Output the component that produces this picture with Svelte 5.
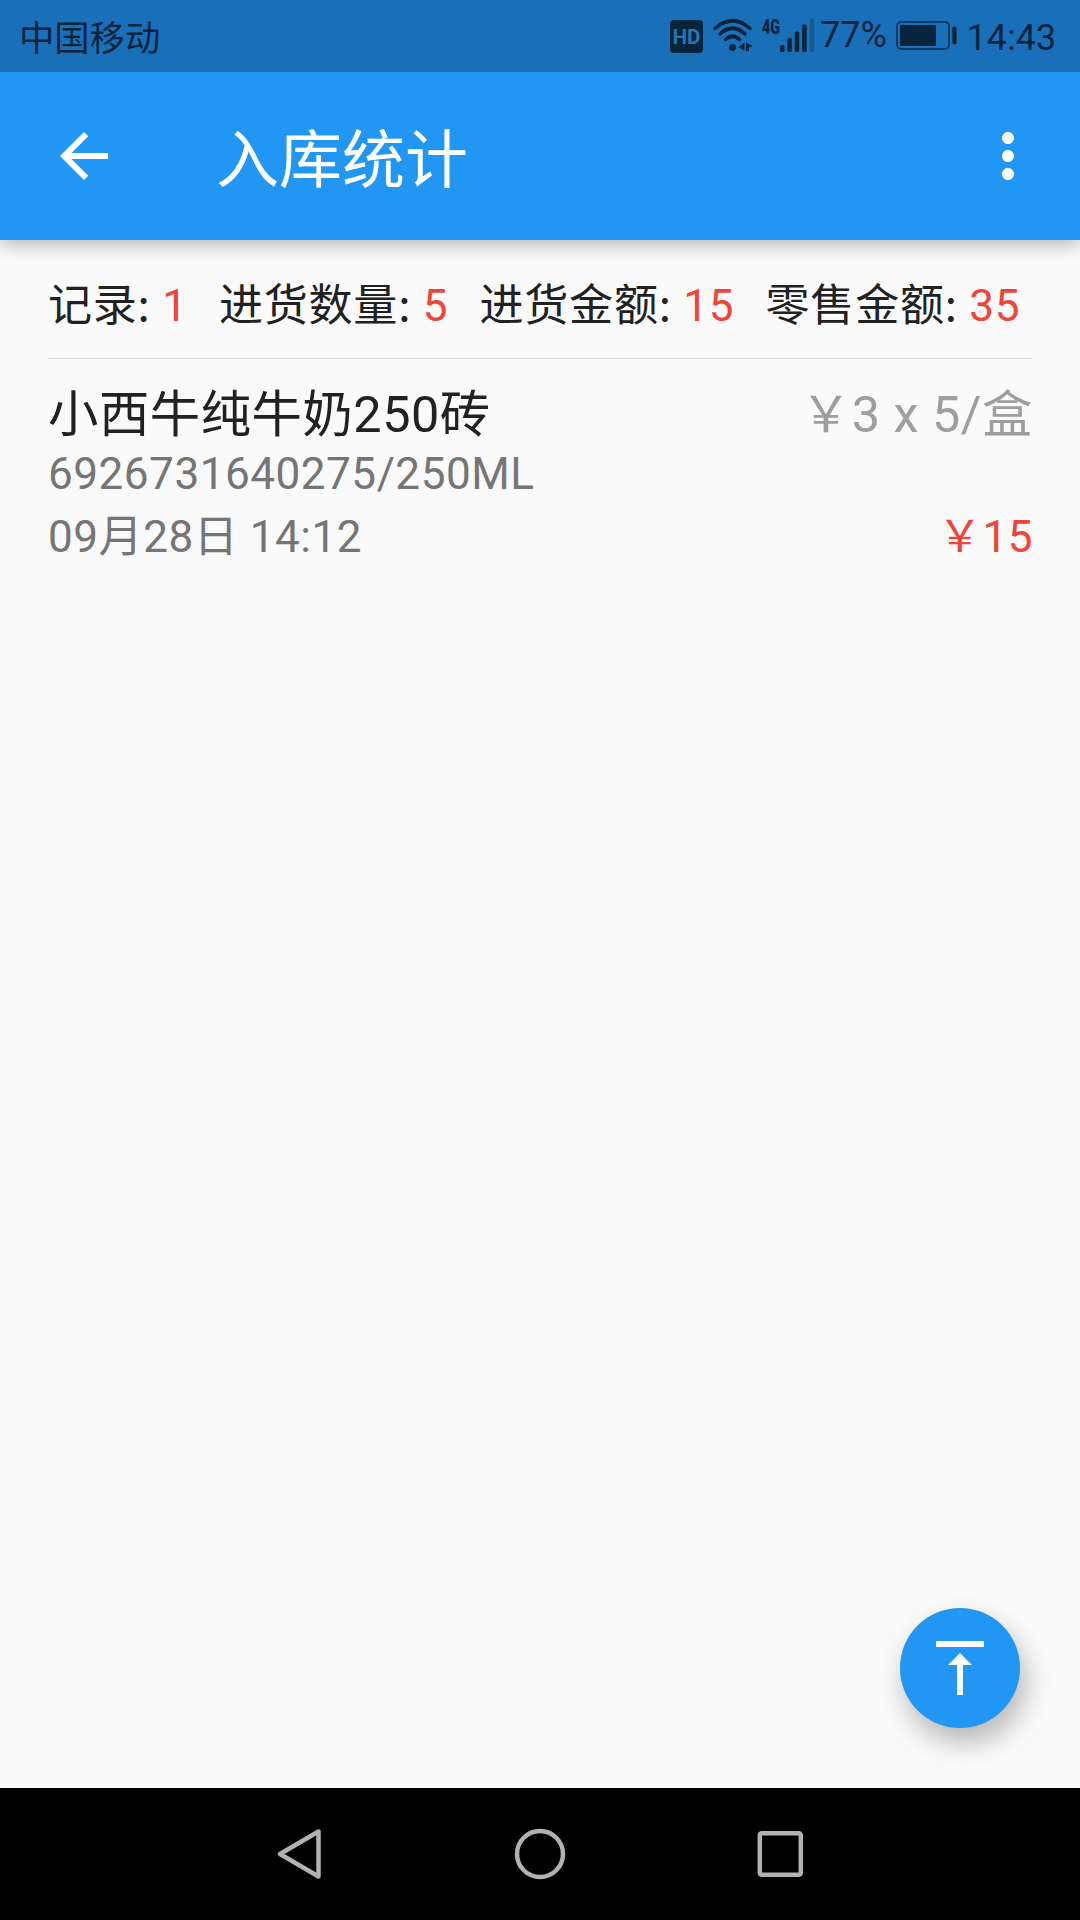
<script>
  const stats = [
    { label: '记录', value: 1 },
    { label: '进货数量', value: 5 },
    { label: '进货金额', value: 15 },
    { label: '零售金额', value: 35 },
  ];

  const records = [
    {
      name: '小西牛纯牛奶250砖',
      price: '\uFFE53 x 5/盒',
      code: '6926731640275/250ML',
      time: '09月28日 14:12',
      total: '\uFFE515',
    },
  ];
</script>

<div class="screen">
  <div class="status">
    <span class="carrier">中国移动</span>
    <svg class="hd" width="33" height="33" viewBox="0 0 33 33">
      <rect width="33" height="33" rx="4" />
      <text x="16.5" y="24" text-anchor="middle" textLength="28" lengthAdjust="spacingAndGlyphs">HD</text>
    </svg>
    <svg class="wifi" width="40" height="34" viewBox="0 0 40 34">
      <g fill="none" stroke="#07243c" stroke-width="3.6" stroke-linecap="round">
        <path d="M2 10.5Q19.500 -5 37 10.500" />
        <path d="M7 16Q19.500 4.500 32 16" />
        <path d="M12.500 21.500Q19.500 15 26.500 21.500" />
      </g>
      <circle cx="19.500" cy="29.500" r="3.400" />
      <path d="M31.500 24.500v8.500l-6-4zM33 24.500l6.500 3.500-3.500 1.200v3.800h-3z" />
    </svg>
    <svg class="signal" width="54" height="36" viewBox="0 0 54 36">
      <text x="0" y="16.500" textLength="18" lengthAdjust="spacingAndGlyphs">4G</text>
      <rect x="18" y="28" width="4.500" height="7" rx="1.500" />
      <rect x="25.300" y="21" width="4.500" height="14" rx="1.500" />
      <rect x="32.700" y="14.500" width="4.500" height="20.500" rx="1.500" />
      <rect x="40.200" y="7.500" width="4.500" height="27.500" rx="1.500" />
      <rect class="dim" x="47.700" y="1.500" width="4.500" height="33.500" rx="1.500" />
    </svg>
    <span class="percent">77%</span>
    <svg class="battery" width="61" height="29" viewBox="0 0 61 29">
      <rect x="1" y="1" width="52" height="27" rx="4" fill="none" stroke="#0c3d66" stroke-width="2" />
      <rect x="4" y="4" width="36" height="21" />
      <rect x="56.300" y="5.500" width="4.300" height="18" rx="2" />
    </svg>
    <span class="clock">14:43</span>
  </div>

  <header class="appbar">
    <svg class="icon" viewBox="0 0 24 24"><path d="M20 11H7.830l5.590-5.590L12 4l-8 8 8 8 1.410-1.410L7.830 13H20v-2z" /></svg>
    <h1>入库统计</h1>
    <svg class="icon" viewBox="0 0 24 24"><path d="M12 8c1.100 0 2-.9 2-2s-.9-2-2-2-2 .9-2 2 .9 2 2 2zm0 2c-1.100 0-2 .9-2 2s.9 2 2 2 2-.9 2-2-.9-2-2-2zm0 6c-1.100 0-2 .9-2 2s.9 2 2 2 2-.9 2-2-.9-2-2-2z" /></svg>
  </header>

  <main>
    <div class="stats">
      {#each stats as s}
        <span><span class="label">{s.label}:</span> <b>{s.value}</b></span>
      {/each}
    </div>
    {#each records as r}
      <article>
        <div class="row name"><span>{r.name}</span><span class="price">{r.price}</span></div>
        <div class="row code">{r.code}</div>
        <div class="row time"><span>{r.time}</span><span class="total">{r.total}</span></div>
      </article>
    {/each}
  </main>

  <button class="fab" aria-label="回到顶部">
    <svg class="icon" viewBox="0 0 24 24"><path d="M8 11h3v10h2V11h3l-4-4-4 4zM4 3v2h16V3H4z" /></svg>
  </button>

  <nav>
    <svg width="55" height="60" viewBox="0 0 55 60"><path d="M43.500 7.500v45L5 30z" /></svg>
    <svg width="60" height="60" viewBox="0 0 60 60"><circle cx="30" cy="30" r="23" /></svg>
    <svg width="60" height="60" viewBox="0 0 60 60"><rect x="9.800" y="9.300" width="41" height="41.500" rx="2" /></svg>
  </nav>
</div>

<style>
  .screen {
    position: relative;
    display: flex;
    flex-direction: column;
    width: 1080px;
    height: 1920px;
    background: #fafafa;
    color: #212121;
    font-family: Roboto, 'Noto Sans CJK SC', sans-serif;
    white-space: nowrap;
    overflow: hidden;
  }
  .status {
    display: flex;
    align-items: flex-start;
    height: 72px;
    background: #1a70b8;
    color: #07243c;
    fill: #07243c;
    font-size: 36px;
    line-height: 42px;
    z-index: 2;
  }
  .status svg {
    flex: none;
    overflow: visible;
  }
  .carrier {
    width: 651px;
    margin: 18px 0 0 19px;
    font-size: 35.300px;
  }
  .hd {
    margin-top: 20px;
  }
  .hd text {
    fill: #2a75b4;
    font-size: 21px;
    font-weight: 700;
  }
  .wifi {
    margin: 18px 0 0 10px;
  }
  .signal {
    margin: 17px 0 0 9px;
  }
  .signal text {
    font-size: 21px;
    font-weight: 900;
  }
  .dim {
    opacity: 0.300;
  }
  .percent {
    margin: 14px 0 0 4px;
    width: 75.500px;
  }
  .battery {
    margin-top: 21px;
  }
  .clock {
    margin: 17px 0 0 10px;
  }
  .appbar {
    display: flex;
    align-items: center;
    height: 168px;
    padding: 0 36px 0 48px;
    box-sizing: border-box;
    background: #2196f3;
    color: #fff;
    box-shadow: 0 6px 16px rgba(0, 0, 0, 0.240);
    z-index: 1;
  }
  .icon {
    flex: none;
    display: block;
    width: 72px;
    height: 72px;
    fill: #fff;
  }
  h1 {
    flex: 1;
    margin: 0 0 0 96px;
    padding-top: 10px;
    font-size: 63px;
    font-weight: 400;
    line-height: 72px;
  }
  main {
    flex: 1;
    padding: 0 48px;
    font-size: 44.100px;
    letter-spacing: 0.700px;
  }
  .stats {
    display: flex;
    gap: 31.300px;
    height: 119px;
    box-sizing: border-box;
    padding-top: 36px;
    line-height: 52px;
    border-bottom: 1px solid #dadada;
  }
  .label {
    font-family: 'Noto Sans CJK SC', sans-serif;
  }
  b {
    font-weight: 400;
    color: #f04439;
  }
  article {
    padding-top: 26px;
  }
  .row {
    display: flex;
    justify-content: space-between;
  }
  .name {
    height: 58px;
    line-height: 60px;
    font-size: 50.400px;
    letter-spacing: 0.500px;
  }
  .price {
    color: #9e9e9e;
    margin-right: -1px;
  }
  .code,
  .time {
    height: 62px;
    line-height: 62px;
    letter-spacing: 0.500px;
    color: #757575;
  }
  .time {
    padding-top: 1px;
  }
  .total {
    color: #f04439;
    margin-right: -1px;
  }
  .fab {
    position: absolute;
    left: 900px;
    top: 1608px;
    width: 120px;
    height: 120px;
    display: grid;
    place-items: center;
    padding: 0;
    border: 0;
    border-radius: 50%;
    background: #2196f3;
    box-shadow: 5px 14px 28px rgba(0, 0, 0, 0.280);
  }
  nav {
    display: flex;
    align-items: center;
    height: 132px;
    padding: 0 270px 0 275px;
    justify-content: space-between;
    background: #000;
    fill: none;
    stroke: #b2b2b2;
    stroke-width: 4.500px;
    stroke-linejoin: round;
  }
</style>
